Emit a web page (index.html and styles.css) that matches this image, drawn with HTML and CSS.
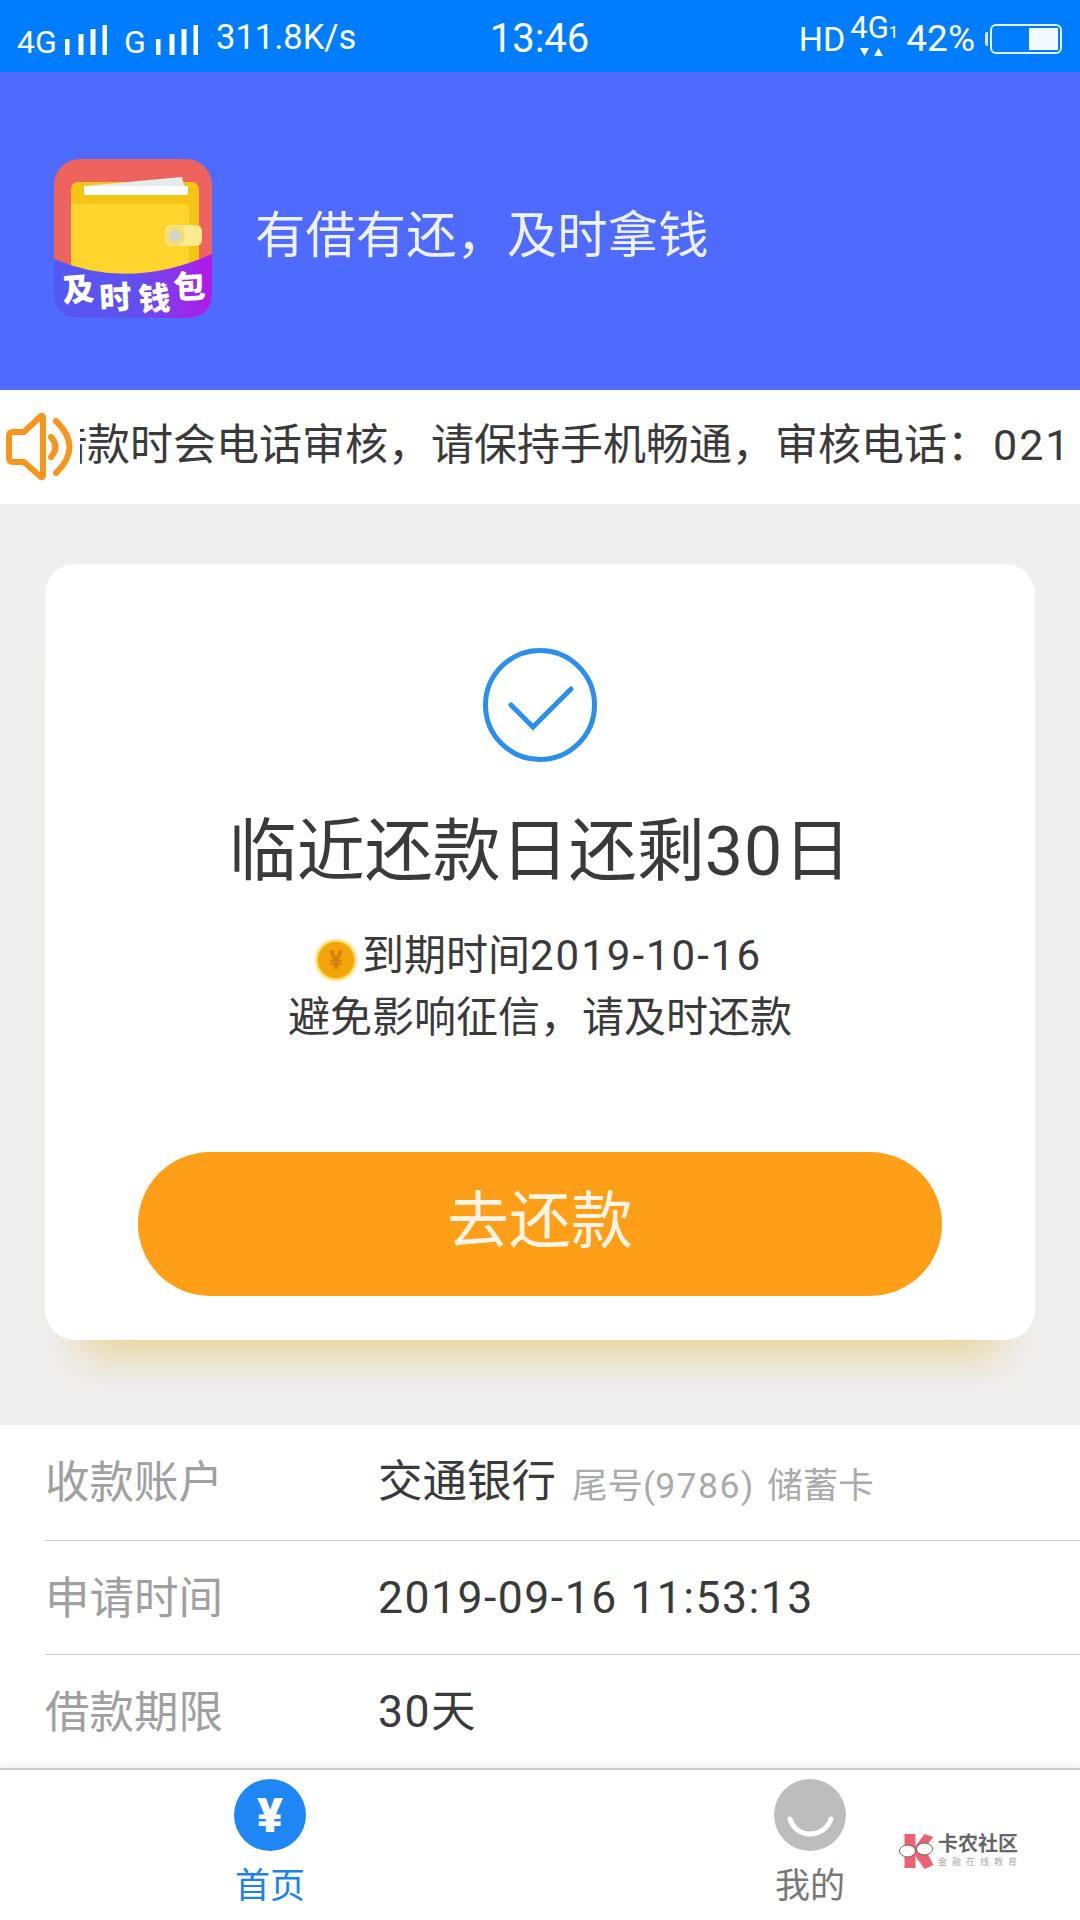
FILE: index.html
```html
<!DOCTYPE html>
<html lang="zh-CN">
<head>
<meta charset="utf-8">
<title>及时钱包</title>
<link rel="stylesheet" href="styles.css">
</head>
<body>
<div class="page">
  <div class="status">
    <div class="status-side">
      <span class="net">4G</span>
      <svg class="bars" width="42" height="30" viewBox="0 0 42 30"><path d="M2 14v16M16 9v21M28 4v26M40 0v30" /></svg>
      <span class="net net-g">G</span>
      <svg class="bars" width="42" height="30" viewBox="0 0 42 30"><path d="M2 14v16M16 9v21M28 4v26M40 0v30" /></svg>
      <span class="speed">311.8K/s</span>
    </div>
    <div class="time">13:46</div>
    <div class="status-side status-right">
      <span class="hd">HD</span>
      <div class="net-stack">
        <span class="net-top">4G<i class="sim">1</i></span>
        <svg class="arrows" width="26" height="9" viewBox="0 0 26 9"><path d="M1 0h9l-4.500 8zM15 8h9l-4.500-8z" /></svg>
      </div>
      <span class="pct">42%</span>
      <span class="nub"></span>
      <div class="battery"><div class="battery-fill"></div></div>
    </div>
  </div>

  <header class="head">
    <svg class="logo" width="159" height="159" viewBox="25 18 159 159">
      <defs>
        <linearGradient id="band" x1="0" x2="1" y1="0" y2="0"><stop offset="0" stop-color="#5358f2"/><stop offset="0.5" stop-color="#5f50f0"/><stop offset="1" stop-color="#b31ae8"/></linearGradient>
      </defs>
      <rect x="25" y="18" width="158" height="159" rx="26" fill="#ef635f"/>
      <rect x="42" y="41" width="128" height="100" rx="7" fill="#f6c414"/>
      <path d="M55 45 153 36 155 44 159 53H55z" fill="#e4ecec"/>
      <rect x="55" y="45" width="104" height="9" fill="#fff"/>
      <path d="M42 63H155q5 0 5 5V141H42z" fill="#ffd42c"/>
      <rect x="136" y="84" width="37" height="21" rx="6" fill="#fdeb8e"/>
      <circle cx="146" cy="95" r="10" fill="#f8dc70"/>
      <circle cx="146" cy="95" r="6" fill="#d4d3d2"/>
      <path d="M25 118Q100 150 183 113V151Q183 177 157 177H51Q25 177 25 151z" fill="url(#band)"/>
      <text class="logo-text" transform="translate(34 161) rotate(-4)">及</text>
      <text class="logo-text" transform="translate(71 169) rotate(-3)">时</text>
      <text class="logo-text" transform="translate(110 170) rotate(-3)">钱</text>
      <text class="logo-text" transform="translate(145 158) rotate(-3)">包</text>
    </svg>
    <div class="slogan">有借有还，及时拿钱</div>
  </header>

  <div class="notice">
    <svg class="speaker" width="80" height="114" viewBox="0 0 80 114">
      <path class="spk-o" d="M41 26 24 42H13Q9 42 9 46V68Q9 72 13 72H24L41 87Q43 88 43 85V28Q43 25 41 26Z"/>
      <path class="spk-o" d="M51 47Q60 57 51 67"/>
      <path class="spk-o" d="M56 31Q83 57 56 83"/>
    </svg>
    <div class="notice-clip"><span class="notice-text">借款时会电话审核，请保持手机畅通，审核电话：<span class="num-wide">021</span></span></div>
  </div>

  <main class="main">
    <section class="card">
      <svg class="check" width="114" height="114" viewBox="0 0 114 114">
        <circle cx="57" cy="57" r="54.500" />
        <path d="M28 57 50 79 88 41" />
      </svg>
      <h1 class="title">临近还款日还剩<span class="num num-title">30</span>日</h1>
      <div class="sub">
        <div class="sub-line"><span class="coin">¥</span>到期时间<span class="num num-date">2019-10-16</span></div>
        <div class="sub-line">避免影响征信，请及时还款</div>
      </div>
      <button class="pay">去还款</button>
    </section>

    <section class="list">
      <div class="row row-first">
        <span class="label">收款账户</span>
        <span class="value">交通银行</span>
        <span class="minor minor-a">尾号(<span class="num">9786</span>)</span>
        <span class="minor">储蓄卡</span>
      </div>
      <div class="row">
        <span class="label">申请时间</span>
        <span class="value num">2019-09-16 11:53:13</span>
      </div>
      <div class="row">
        <span class="label">借款期限</span>
        <span class="value"><span class="num">30</span>天</span>
      </div>
    </section>
  </main>

  <nav class="nav">
    <a class="tab tab-on">
      <span class="tab-icon tab-icon-on">¥</span>
      <span class="tab-label">首页</span>
    </a>
    <a class="tab">
      <svg class="tab-svg" width="72" height="72" viewBox="0 0 72 72"><circle cx="36" cy="36" r="36" fill="#bdbdbd"/><path d="M16 40C22 60 50 60 57 40" fill="none" stroke="#fff" stroke-width="5" stroke-linecap="round"/></svg>
      <span class="tab-label">我的</span>
    </a>
    <div class="mark">
      <svg class="mark-icon" width="36" height="36" viewBox="0 0 35 36">
        <path d="M6 1h11v12L26 1l9 3-9 11 9 17-9 4-9-13v12H6z" fill="#ec6272"/>
        <ellipse cx="9" cy="18" rx="8" ry="6" fill="#fff" stroke="#666" stroke-width="1"/>
        <ellipse cx="26" cy="16" rx="8" ry="6" fill="#fff" stroke="#666" stroke-width="1"/>
      </svg>
      <div class="mark-text">
        <span class="mark-main">卡农社区</span>
        <span class="mark-sub">金融在线教育</span>
      </div>
    </div>
  </nav>
</div>
</body>
</html>
```

FILE: styles.css
```css
* { box-sizing: border-box; margin: 0; padding: 0; }
html, body { width: 1080px; height: 1920px; overflow: hidden; background: #fff; }
body { font-family: Roboto, "Noto Sans CJK SC", sans-serif; color: #3a3a3a; }
.page { width: 1080px; height: 1920px; display: flex; flex-direction: column; overflow: hidden; }

.status { height: 72px; flex: none; background: #007dff; color: #fff; display: flex; align-items: center; padding: 5px 18px 0 17px; }
.status-side { flex: 1; display: flex; align-items: center; }
.status-right { justify-content: flex-end; }
.net { font-size: 32px; line-height: 34px; width: 39px; margin-top: 6px; }
.net-g { width: 23px; margin: 6px 9px 0 17px; }
.bars { margin-left: 9px; margin-top: 2px; flex: none; }
.status-side > .net-g + .bars { margin-left: 0; }
.bars path { fill: none; stroke: #fff; stroke-width: 5; }
.speed { font-size: 34.500px; line-height: 40px; margin-left: 18px; margin-top: -4px; }
.time { font-size: 40px; line-height: 48px; flex: none; }
.hd { font-size: 34px; line-height: 36px; }
.net-stack { display: flex; flex-direction: column; align-items: flex-start; margin-left: 5px; width: 50px; margin-top: -7px; }
.net-top { font-size: 31px; line-height: 30px; }
.sim { font-style: normal; font-size: 17px; }
.arrows { margin-left: 9px; margin-top: 1px; }
.arrows path { fill: #fff; }
.pct { font-size: 37px; line-height: 40px; margin-left: 6px; }
.nub { width: 3px; height: 14px; background: #d6e8ff; margin-left: 10px; border-radius: 2px 0 0 2px; }
.battery { width: 72px; height: 30px; border: 2px solid #e4f1ff; border-radius: 6px; margin-left: 2px; padding: 2px; display: flex; justify-content: flex-end; }
.battery-fill { width: 29px; background: #f2f9ff; }

.head { height: 318px; flex: none; background: #4f6bff; display: flex; align-items: center; padding: 14px 0 0 54px; }
.logo { flex: none; }
.logo-text { font-family: "Noto Sans CJK SC", sans-serif; font-size: 32px; font-weight: 900; fill: #fff; }
.slogan { margin-left: 42px; font-size: 50.400px; line-height: 60px; color: #eef1ff; margin-top: -5px; }

.notice { height: 114px; flex: none; background: #fff; display: flex; align-items: center; }
.speaker { flex: none; }
.spk-o { fill: none; stroke: #f7951d; stroke-width: 6; stroke-linecap: round; stroke-linejoin: round; }
.notice-clip { flex: 1; overflow: hidden; white-space: nowrap; }
.notice-text { display: block; margin-top: -5px; margin-left: -36px; font-size: 43px; line-height: 60px; color: #3a3a3a; }
.num-wide { letter-spacing: 2px; margin-left: 3px; }

.main { flex: 1; min-height: 0; background: #efefef; padding-top: 60px; overflow: hidden; }
.card { width: 990px; margin: 0 45px 85px; height: 776px; background: #fff; border-radius: 30px; padding-top: 84px; display: flex; flex-direction: column; align-items: center; box-shadow: 0 45px 40px -36px rgba(245, 180, 50, .42), 0 62px 36px -44px rgba(215, 215, 170, .4); }
.check { flex: none; }
.check circle, .check path { fill: none; stroke: #2b8ff0; stroke-width: 5; }
.check path { stroke-linecap: round; stroke-linejoin: miter; }
.title { margin-top: 45px; font-size: 68px; line-height: 90px; font-weight: 400; color: #3a3a3a; }
.sub { margin-top: 28px; text-align: center; font-size: 42px; line-height: 62px; color: #3a3a3a; }
.sub-line { display: flex; align-items: center; justify-content: center; }
.num { letter-spacing: 1.500px; }
.num-title { letter-spacing: 1px; }
.num-date { letter-spacing: 2px; }
.coin { width: 36px; height: 36px; margin: 8px 8px 0 0; border-radius: 50%; background: #f5a50c; box-shadow: 0 0 3px 2px #ffc91f; color: #d7810a; font-size: 26px; line-height: 36px; font-weight: 700; text-align: center; }
.pay { margin-top: 103px; width: 804px; height: 144px; border: 0; border-radius: 72px; background: #ff9f17; color: #fff5e6; font-family: inherit; font-size: 62px; line-height: 68px; padding-bottom: 4px; }

.list { background: #fff; }
.row { margin-left: 45px; height: 114px; display: flex; align-items: center; border-bottom: 1px solid #c9c9c9; }
.row-first { height: 116px; padding-bottom: 2px; }
.label { width: 333px; padding-top: 3px; font-size: 44.500px; line-height: 56px; color: #a0a0a0; flex: none; }
.value { font-size: 44.500px; line-height: 56px; color: #3a3a3a; }
.minor { font-size: 35.500px; line-height: 56px; color: #aaa; margin-left: 14px; padding-top: 8px; }
.minor-a { margin-left: 16px; }

.nav { position: relative; height: 152px; flex: none; background: #fff; border-top: 2px solid #c8cccc; box-shadow: 0 -4px 6px rgba(200, 205, 205, .25); display: flex; }
.tab { flex: 1; display: flex; flex-direction: column; align-items: center; padding-top: 9px; color: #777; }
.tab-on { color: #1a82f0; }
.tab-icon { width: 72px; height: 72px; border-radius: 50%; display: flex; align-items: center; justify-content: center; }
.tab-icon-on { background: #1f86f5; color: #fff; font-size: 48px; font-weight: 900; }
.tab-svg { flex: none; }
.tab-label { font-size: 35px; line-height: 44px; margin-top: 14px; }

.mark { position: absolute; left: 898px; top: 63px; display: flex; align-items: flex-start; gap: 4px; }
.mark-icon { flex: none; }
.mark-text { display: flex; flex-direction: column; }
.mark-main { font-size: 20px; line-height: 22px; font-weight: 700; color: #666; white-space: nowrap; }
.mark-sub { font-size: 9px; line-height: 12px; letter-spacing: 5px; color: #aaa; white-space: nowrap; margin-top: 1px; }
```
